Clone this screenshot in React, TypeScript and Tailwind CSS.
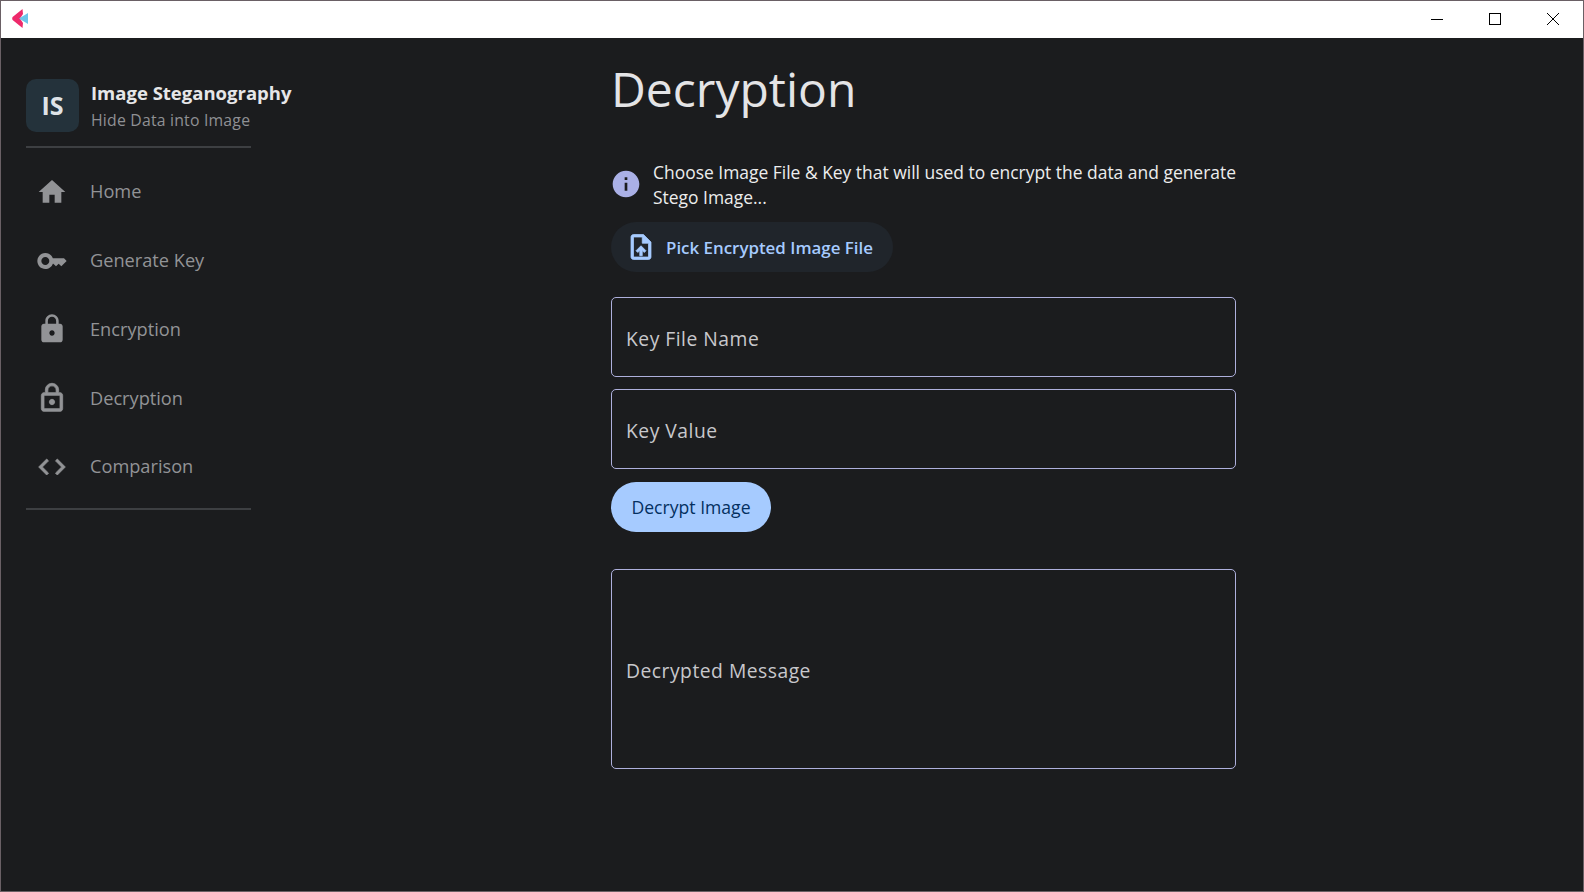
// App.tsx
// Image Steganography — Decryption screen

import type { ReactNode } from "react";

const icons = {
  home: "M10 20v-6h4v6h5v-8h3L12 3 2 12h3v8z",
  key: "M21 10h-8.35C11.83 7.67 9.61 6 7 6c-3.31 0-6 2.69-6 6s2.69 6 6 6c2.61 0 4.83-1.67 5.65-4H13l2 2 2-2 2 2 4-4.04L21 10zM7 15c-1.65 0-3-1.35-3-3s1.35-3 3-3 3 1.35 3 3-1.35 3-3 3z",
  lock: "M18 8h-1V6c0-2.76-2.24-5-5-5S7 3.24 7 6v2H6c-1.1 0-2 .9-2 2v10c0 1.1.9 2 2 2h12c1.1 0 2-.9 2-2V10c0-1.1-.9-2-2-2zm-6 9c-1.1 0-2-.9-2-2s.9-2 2-2 2 .9 2 2-.9 2-2 2zm3.1-9H8.9V6c0-1.71 1.39-3.1 3.1-3.1 1.71 0 3.1 1.39 3.1 3.1v2z",
  lockOutline:
    "M12 17c1.1 0 2-.9 2-2s-.9-2-2-2-2 .9-2 2 .9 2 2 2zm6-9h-1V6c0-2.76-2.24-5-5-5S7 3.24 7 6v2H6c-1.1 0-2 .9-2 2v10c0 1.1.9 2 2 2h12c1.1 0 2-.9 2-2V10c0-1.1-.9-2-2-2zM8.9 6c0-1.71 1.39-3.1 3.1-3.1s3.1 1.39 3.1 3.1v2H8.9V6zM18 20H6V10h12v10z",
  code: "M9.4 16.6 4.8 12l4.6-4.6L8 6l-6 6 6 6 1.4-1.4zm5.2 0 4.6-4.6-4.6-4.6L16 6l6 6-6 6-1.4-1.4z",
  info: "M12 2C6.48 2 2 6.48 2 12s4.48 10 10 10 10-4.48 10-10S17.52 2 12 2zm1 15h-2v-6h2v6zm0-8h-2V7h2v2z",
  upload:
    "M14 2H6c-1.1 0-1.99.9-1.99 2L4 20c0 1.1.89 2 1.99 2H18c1.1 0 2-.9 2-2V8l-6-6zm4 18H6V4h7v5h5v11zM8 15.01l1.41 1.41L11 14.84V19h2v-4.16l1.59 1.59L16 15.01 12.01 11 8 15.01z",
};

const navItems = [
  { label: "Home", icon: icons.home },
  { label: "Generate Key", icon: icons.key },
  { label: "Encryption", icon: icons.lock },
  { label: "Decryption", icon: icons.lockOutline, heavy: true },
  { label: "Comparison", icon: icons.code, heavy: true },
];

function Icon({ d, className, heavy }: { d: string; className?: string; heavy?: boolean }) {
  return (
    <svg viewBox="0 0 24 24" fill="currentColor" className={className} aria-hidden="true">
      <path d={d} stroke={heavy ? "currentColor" : undefined} strokeWidth={heavy ? 0.6 : undefined} strokeLinejoin="round" />
    </svg>
  );
}

function TitleBar() {
  return (
    <div className="flex h-[37px] shrink-0 items-center justify-between bg-white">
      <svg viewBox="0 0 16 19" className="mb-[2px] ml-[11px] h-[19px] w-[16px]" aria-hidden="true">
        <path d="M10.5 0 L0.6 8 Q-0.2 9.5 0.6 11 L10.5 19 L11 14 L8 9.5 L11 5 Z" fill="#ee2a6b" />
        <path d="M16 4 L7 9.5 L16 15 Z" fill="#6cc5ea" />
      </svg>
      <div className="mb-[1px] mr-[1px] flex items-center text-black">
        <div className="flex h-[36px] w-[58px] items-center justify-center">
          <div className="h-px w-[12px] bg-black" />
        </div>
        <div className="flex h-[36px] w-[58px] items-center justify-center">
          <div className="h-[12px] w-[12px] border border-black" />
        </div>
        <div className="flex h-[36px] w-[58px] items-center justify-center">
          <svg viewBox="0 0 12 12" className="h-[12px] w-[12px]" aria-hidden="true">
            <path d="M0 0 L12 12 M12 0 L0 12" stroke="black" strokeWidth="1" />
          </svg>
        </div>
      </div>
    </div>
  );
}

function Sidebar() {
  return (
    <aside className="flex w-[610px] shrink-0 flex-col pl-[25px] pt-[41px]">
      <div className="flex items-center gap-[12px]">
        <div className="flex h-[53px] w-[53px] items-center justify-center rounded-[10px] bg-[#24323b] text-[25px] font-bold text-[#dfe3e7]">
          IS
        </div>
        <div>
          <div className="text-[18.5px] font-bold leading-[24px] text-[#e6e6e8]">Image Steganography</div>
          <div className="mt-[4px] text-[15.8px] leading-[22px] tracking-[0.2px] text-[#8f9094]">Hide Data into Image</div>
        </div>
      </div>
      <div className="mt-[14px] h-[2px] w-[225px] bg-[#3d3f42]" />
      <nav className="mt-[9.5px] flex w-[225px] flex-col">
        {navItems.map((item) => (
          <div key={item.label} className="flex h-[68.8px] items-center text-[#929396]">
            <div className="-ml-[1px] flex w-[54px] justify-center">
              <Icon d={item.icon} heavy={item.heavy} className="h-[32px] w-[32px]" />
            </div>
            <span className="ml-[11px] text-[18.2px]">{item.label}</span>
          </div>
        ))}
      </nav>
      <div className="mt-[6.5px] h-[2px] w-[225px] bg-[#3d3f42]" />
    </aside>
  );
}

function Field({ label, className }: { label: ReactNode; className: string }) {
  return (
    <div
      className={`flex w-[625px] items-center rounded-[5px] border border-[#aeb0dc] pl-[14px] pt-[5px] text-[19.3px] tracking-[0.5px] text-[#c8c8cc] ${className}`}
    >
      {label}
    </div>
  );
}

export default function App() {
  return (
    <div
      className="flex h-[892px] w-[1584px] flex-col overflow-hidden border border-[#6a6065] bg-[#1b1c1e]"
      style={{ fontFamily: '"Open Sans", sans-serif' }}
    >
      <TitleBar />
      <div className="flex min-h-0 flex-1">
        <Sidebar />
        <main className="flex flex-col pt-[16px]">
          <h1 className="text-[48px] font-normal leading-[70px] text-[#e4e4e6]">Decryption</h1>

          {/* Info line */}
          <div className="mt-[36px] flex items-center">
            <Icon d={icons.info} className="-ml-[1px] mb-[2px] h-[32px] w-[32px] text-[#aab0e6]" />
            <p className="ml-[11px] w-[590px] text-[17.45px] leading-[25px] text-[#eceded]">
              Choose Image File &amp; Key that will used to encrypt the data and generate Stego Image...
            </p>
          </div>

          <button className="mt-[12px] flex h-[50px] w-[282px] items-center rounded-full bg-[#20252b] pl-[15px] text-[16.9px] font-semibold text-[#a6cbff]">
            <Icon d={icons.upload} heavy className="h-[30px] w-[30px]" />
            <span className="ml-[10px] pt-[1px]">Pick Encrypted Image File</span>
          </button>

          <Field label="Key File Name" className="mt-[25px] h-[80px]" />
          <Field label="Key Value" className="mt-[12px] h-[80px]" />

          <button className="mt-[13px] flex h-[50px] w-[160px] items-center justify-center rounded-full bg-[#a6cbff] text-[17.6px] font-medium text-[#04305f]">
            Decrypt Image
          </button>

          <Field label="Decrypted Message" className="mt-[37px] h-[200px]" />
        </main>
      </div>
    </div>
  );
}
